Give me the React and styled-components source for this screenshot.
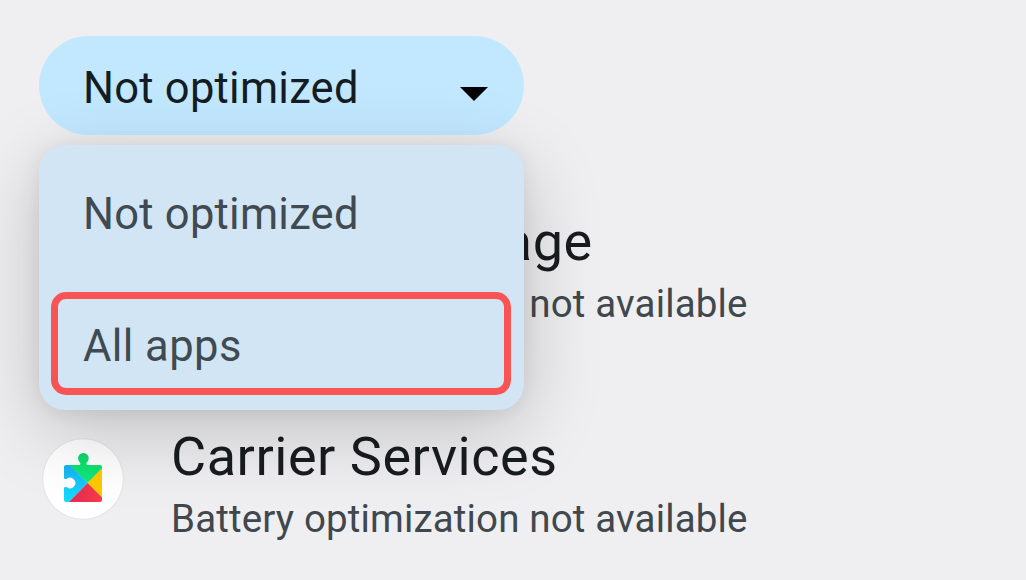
import React from "react";
import styled, { createGlobalStyle } from "styled-components";

const GlobalStyle = createGlobalStyle`
  * { box-sizing: border-box; }
  body {
    margin: 0;
    overflow: hidden;
    background: #efeff1;
    font-family: Roboto, "Noto Sans", sans-serif;
  }
`;

const Screen = styled.main`
  height: 580px;
  padding-top: 36px;
  overflow: hidden;
  background: #efeff1;
`;

const Filter = styled.div`
  position: relative;
  width: 485px;
  margin-left: 39px;
`;

const FilterButton = styled.button`
  display: flex;
  align-items: center;
  justify-content: space-between;
  width: 100%;
  height: 99px;
  padding: 7px 36px 0 44px;
  border: 0;
  border-radius: 50px;
  background: #c2e8ff;
  color: #141d23;
  font: 400 43.5px/52px Roboto, sans-serif;
  letter-spacing: 0.25px;
`;

const Caret = styled.svg`
  display: block;
  width: 28px;
  height: 14px;
  margin-top: 9px;
`;

const Menu = styled.ul`
  position: absolute;
  z-index: 1;
  top: 109px;
  left: 0;
  width: 100%;
  height: 265px;
  margin: 0;
  padding: 14px 13px 14px 12px;
  list-style: none;
  border-radius: 26px;
  background: #d2e5f4;
  box-shadow: 0 20px 80px rgba(0, 0, 0, 0.2), 0 2px 20px rgba(0, 0, 0, 0.07);
`;

const MenuItem = styled.li`
  display: flex;
  align-items: center;
  height: ${(p) => (p.$marked ? 103 : 133)}px;
  padding: ${(p) => (p.$marked ? "7px 0 0 25px" : "0 0 21px 32px")};
  border: ${(p) => (p.$marked ? "7px solid #f95454" : "0")};
  border-radius: 15px;
  color: #3f4a51;
  font-size: 43.5px;
  line-height: 52px;
  letter-spacing: ${(p) => (p.$marked ? 0.45 : 0.25)}px;
`;

const AppList = styled.ul`
  margin: 22px 0 0;
  padding: 0;
  list-style: none;
`;

const AppRow = styled.li`
  display: flex;
  align-items: flex-start;
  height: 215px;
  padding: 53px 0 0 42px;
`;

const IconSlot = styled.div`
  width: 82px;
  height: 82px;
  margin: 13px 47px 0 0;
`;

const AppIcon = styled.svg`
  display: block;
  width: 82px;
  height: 82px;
`;

const AppName = styled.div`
  color: #191c1e;
  font-size: 54px;
  line-height: 64px;
  letter-spacing: 0.53px;
  white-space: nowrap;
`;

const AppStatus = styled.div`
  margin-top: 7px;
  color: #41484d;
  font-size: 38.5px;
  line-height: 46px;
  letter-spacing: 0.15px;
  white-space: nowrap;
`;

const PuzzleIcon = () => (
  <AppIcon viewBox="0 0 82 82">
    <defs>
      <clipPath id="puzzle">
        <path d="M24 27H37.2C38.4 27 38.7 25.6 37.9 24.2A5.3 5.3 0 1 1 44.9 24.2C44.1 25.6 44.4 27 45.6 27H58Q60 27 60 29V62Q60 64 58 64H24Q22 64 22 62V50.2C22 49 23.4 48.7 24.8 49.2A5.3 5.3 0 1 0 24.8 40.8C23.4 41.3 22 41 22 39.8V29Q22 27 24 27Z" />
      </clipPath>
      <linearGradient id="green" x2="0" y2="1">
        <stop stopColor="#0dd066" />
        <stop offset="0.5" stopColor="#10e170" />
        <stop offset="1" stopColor="#10e880" />
      </linearGradient>
      <linearGradient id="blue" x2="0" y2="1">
        <stop stopColor="#16afed" />
        <stop offset="0.6" stopColor="#13ccfb" />
        <stop offset="1" stopColor="#13dcff" />
      </linearGradient>
      <linearGradient id="red" x2="1">
        <stop stopColor="#dc2c55" />
        <stop offset="1" stopColor="#fb3b48" />
      </linearGradient>
    </defs>
    <circle cx="41" cy="41" r="41" fill="#e7e7e9" />
    <circle cx="41" cy="41" r="39.8" fill="#fff" />
    <g clipPath="url(#puzzle)">
      <path d="M22 12H62V29L45.5 45L26 26Z" fill="url(#green)" />
      <path d="M20 26H26.5L45.5 45L27 64H20Z" fill="url(#blue)" />
      <path d="M61 29V61L45.5 45Z" fill="#ffc900" />
      <path d="M45.5 45L61 60.5V65H26Z" fill="url(#red)" />
    </g>
  </AppIcon>
);

const apps = [
  { name: "Calendar Storage" },
  { name: "Carrier Services", icon: <PuzzleIcon /> },
];

export default function App() {
  return (
    <Screen>
      <GlobalStyle />
      <Filter>
        <FilterButton type="button">
          Not optimized
          <Caret viewBox="0 0 28 14">
            <path d="M0 0H28L14 14Z" fill="#000" />
          </Caret>
        </FilterButton>
        <Menu>
          <MenuItem>Not optimized</MenuItem>
          <MenuItem $marked>All apps</MenuItem>
        </Menu>
      </Filter>
      <AppList>
        {apps.map((app) => (
          <AppRow key={app.name}>
            <IconSlot>{app.icon}</IconSlot>
            <div>
              <AppName>{app.name}</AppName>
              <AppStatus>Battery optimization not available</AppStatus>
            </div>
          </AppRow>
        ))}
      </AppList>
    </Screen>
  );
}
